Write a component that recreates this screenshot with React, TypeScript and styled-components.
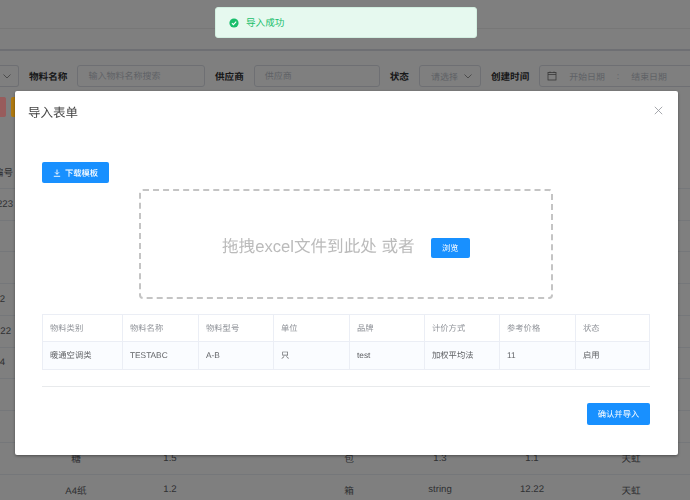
import styled, { createGlobalStyle } from "styled-components";

const GlobalStyle = createGlobalStyle`
    html, body {
        margin: 0;
        padding: 0;
        width: 690px;
        height: 500px;
        overflow: hidden;
        background: #fff;
        font-family: "Liberation Sans", "Noto Sans CJK SC", sans-serif;
        text-rendering: geometricPrecision;
    }
`;

const bgRows = [
    { edge: "223", inset: 1, cells: [] },
    { edge: "", inset: 0, cells: [] },
    { edge: "", inset: 0, cells: [] },
    { edge: "2", inset: 9, cells: [] },
    { edge: ".22", inset: 3, cells: [] },
    { edge: "4", inset: 9, cells: [] },
    { edge: "", inset: 0, cells: [] },
    { edge: "", inset: 0, cells: [] },
    { edge: "", inset: 0, cells: ["糖", "1.5", "", "包", "1.3", "1.1", "天虹"] },
    { edge: "", inset: 0, cells: ["A4纸", "1.2", "", "箱", "string", "12.22", "天虹"] },
];

const headers = ["物料类别", "物料名称", "物料型号", "单位", "品牌", "计价方式", "参考价格", "状态"];
const row = ["暖通空调类", "TESTABC", "A-B", "只", "test", "加权平均法", "11", "启用"];
const colWidths = [80, 76, 75, 76, 75, 75, 76, 74];

export default function App() {
    return (
        <>
            <GlobalStyle />
            <Page>
                <TopBar />
                <TabBar />
                <Filters>
                    <SelectBox $width={19} $flush>
                        <Chevron />
                    </SelectBox>
                    <Label>物料名称</Label>
                    <InputBox $width={127.6}>输入物料名称搜索</InputBox>
                    <Label>供应商</Label>
                    <InputBox $width={126}>供应商</InputBox>
                    <Label>状态</Label>
                    <SelectBox $width={62}>
                        <Placeholder>请选择</Placeholder>
                        <Chevron />
                    </SelectBox>
                    <Label>创建时间</Label>
                    <DateBox>
                        <svg width="10" height="10" viewBox="0 0 10 10" fill="none" stroke="#6e6e6e" strokeWidth="0.8">
                            <rect x="1" y="1.5" width="8" height="7.5" />
                            <path d="M1 3.5h8M3 .5v1.5M7 .5v1.5" />
                        </svg>
                        <DateText>开始日期</DateText>
                        <DateText>:</DateText>
                        <DateText>结束日期</DateText>
                    </DateBox>
                </Filters>
                <Actions>
                    <ActionButton $color="#985c5c" />
                    <ActionButton $color="#b07a10" />
                </Actions>
                <BgTable>
                    <BgRow $head>
                        <BgEdge $inset={1}>编号</BgEdge>
                    </BgRow>
                    {bgRows.map((r, i) => (
                        <BgRow key={i}>
                            <BgEdge $inset={r.inset}>{r.edge}</BgEdge>
                            {r.cells.map((c, j) => (
                                <BgCell key={j}>{c}</BgCell>
                            ))}
                        </BgRow>
                    ))}
                </BgTable>
            </Page>

            <Mask />

            <Toast>
                <svg width="10" height="10" viewBox="0 0 10 10">
                    <circle cx="5" cy="5" r="4.6" fill="#19be6b" />
                    <path d="M2.9 5.1l1.5 1.5 2.8-2.9" fill="none" stroke="#fff" strokeWidth="1.1" />
                </svg>
                <ToastText>导入成功</ToastText>
            </Toast>

            <Modal>
                <ModalHeader>
                    <ModalTitle>导入表单</ModalTitle>
                    <CloseButton>
                        <svg width="9" height="9" viewBox="0 0 9 9" stroke="#909399" strokeWidth="0.8" fill="none">
                            <path d="M.8.8l7.4 7.4M8.2.8L.8 8.2" />
                        </svg>
                    </CloseButton>
                </ModalHeader>
                <ModalBody>
                    <DownloadButton>
                        <svg width="8" height="8" viewBox="0 0 8 8" fill="none" stroke="#fff" strokeWidth="0.9">
                            <path d="M4 .5v4.6M2 3.3L4 5.3 6 3.3M.8 7.3h6.4" />
                        </svg>
                        下载模板
                    </DownloadButton>
                    <DropZone>
                        <DropText>拖拽excel文件到此处 或者</DropText>
                        <BrowseButton>浏览</BrowseButton>
                    </DropZone>
                    <PreviewTable>
                        <colgroup>
                            {colWidths.map((w, i) => (
                                <col key={i} width={w} />
                            ))}
                        </colgroup>
                        <thead>
                            <tr>
                                {headers.map((h) => (
                                    <HeadCell key={h}>{h}</HeadCell>
                                ))}
                            </tr>
                        </thead>
                        <tbody>
                            <tr>
                                {row.map((c) => (
                                    <BodyCell key={c}>{c}</BodyCell>
                                ))}
                            </tr>
                        </tbody>
                    </PreviewTable>
                    <Divider />
                    <Footer>
                        <ConfirmButton>确认并导入</ConfirmButton>
                    </Footer>
                </ModalBody>
            </Modal>
        </>
    );
}

const Chevron = () => (
    <svg width="8" height="5" viewBox="0 0 8 5" fill="none" stroke="#6b6b6b" strokeWidth="0.7">
        <path d="M.5.5L4 4 7.5.5" />
    </svg>
);

const Page = styled.div`
    width: 690px;
    height: 500px;
    overflow: hidden;
    display: flex;
    flex-direction: column;
`;

const TopBar = styled.div`
    height: 28px;
    flex: none;
    border-bottom: 1px solid #eee;
`;

const TabBar = styled.div`
    height: 20px;
    flex: none;
    border-bottom: 2px solid #dcdfe6;
`;

const Filters = styled.div`
    display: flex;
    align-items: center;
    height: 22px;
    margin-top: 14px;
    flex: none;
`;

const Label = styled.span`
    font-size: 9.6px;
    font-weight: 700;
    color: #303133;
    margin: 0 10px;
    white-space: nowrap;
`;

const InputBox = styled.div<{ $width: number }>`
    width: ${(p) => p.$width}px;
    height: 22px;
    box-sizing: border-box;
    border: 1px solid #dcdfe6;
    border-radius: 3px;
    font-size: 9px;
    line-height: 20px;
    color: #c0c4cc;
    padding-left: 10px;
    flex: none;
`;

const SelectBox = styled.div<{ $width: number; $flush?: boolean }>`
    width: ${(p) => p.$width}px;
    height: 22px;
    box-sizing: border-box;
    border: 1px solid #dcdfe6;
    border-left: ${(p) => (p.$flush ? "none" : "1px solid #dcdfe6")};
    border-radius: ${(p) => (p.$flush ? "0 3px 3px 0" : "3px")};
    display: flex;
    align-items: center;
    justify-content: space-between;
    padding-left: ${(p) => (p.$flush ? "3px" : "11px")};
    padding-right: ${(p) => (p.$flush ? "3px" : "8px")};
    flex: none;
`;

const Placeholder = styled.span`
    font-size: 9px;
    color: #c0c4cc;
`;

const DateBox = styled.div`
    flex: 1;
    height: 22px;
    margin-right: -40px;
    box-sizing: border-box;
    border: 1px solid #dcdfe6;
    border-radius: 3px;
    display: flex;
    align-items: center;
    padding-left: 7px;
    gap: 12px;
`;

const DateText = styled.span`
    font-size: 8.9px;
    color: #c0c4cc;
    white-space: nowrap;
`;

const Actions = styled.div`
    display: flex;
    gap: 5px;
    margin-top: 10px;
    flex: none;
`;

const ActionButton = styled.div<{ $color: string }>`
    width: 6px;
    height: 20px;
    background: ${(p) => p.$color};
    border-radius: 0 2px 2px 0;
    position: relative;
    z-index: 2;
    &:last-child {
        width: 40px;
        border-radius: 2px;
    }
`;

const BgTable = styled.div`
    margin-top: 39px;
    flex: none;
    font-size: 9.6px;
    color: #606266;
`;

const BgRow = styled.div<{ $head?: boolean }>`
    display: grid;
    grid-template-columns: 14px 124px 64px 104px 86px 96px 88px 110px;
    height: 31.75px;
    box-sizing: border-box;
    border-top: ${(p) => (p.$head ? "none" : "1px solid #ebeef5")};
    align-items: center;
`;

const BgCell = styled.div`
    text-align: center;
    white-space: nowrap;
`;

const BgEdge = styled.div<{ $inset: number }>`
    display: flex;
    justify-content: flex-end;
    padding-right: ${(p) => p.$inset}px;
    white-space: nowrap;
`;

const Mask = styled.div`
    position: fixed;
    inset: 0;
    background: rgba(0, 0, 0, 0.5);
    z-index: 1;
`;

const Toast = styled.div`
    position: fixed;
    left: 215px;
    top: 7px;
    width: 262px;
    height: 31px;
    box-sizing: border-box;
    background: #e6f9ef;
    border: 1px solid #d2efe0;
    border-radius: 3px;
    display: flex;
    align-items: center;
    padding-left: 13px;
    gap: 7px;
    z-index: 4;
`;

const ToastText = styled.span`
    font-size: 9.6px;
    color: #19be6b;
    margin-top: -1px;
`;

const Modal = styled.div`
    position: fixed;
    left: 15px;
    top: 91px;
    width: 663px;
    height: 364px;
    background: #fff;
    border-radius: 2px;
    box-shadow: 0 1px 3px rgba(0, 0, 0, 0.4);
    z-index: 3;
    display: flex;
    flex-direction: column;
`;

const ModalHeader = styled.div`
    display: flex;
    justify-content: space-between;
    align-items: flex-start;
    padding: 14px 15px 0 13px;
    height: 71px;
    box-sizing: border-box;
    flex: none;
`;

const ModalTitle = styled.div`
    font-size: 12.5px;
    line-height: 17px;
    color: #444;
`;

const CloseButton = styled.div`
    padding-top: 1px;
    line-height: 0;
`;

const ModalBody = styled.div`
    padding: 0 28px 0 27px;
    display: flex;
    flex-direction: column;
`;

const DownloadButton = styled.div`
    align-self: flex-start;
    width: 67px;
    height: 21px;
    background: #1890ff;
    border-radius: 2px;
    color: #fff;
    font-size: 8.3px;
    font-weight: 500;
    display: flex;
    align-items: center;
    justify-content: center;
    gap: 4px;
`;

const DropZone = styled.div`
    align-self: center;
    margin-top: 6px;
    width: 414px;
    height: 110px;
    box-sizing: border-box;
    border: 2px dashed #c4c4c4;
    border-radius: 4px;
    display: flex;
    align-items: center;
    padding-left: 81px;
`;

const DropText = styled.span`
    font-size: 16.6px;
    color: #bbb;
    white-space: nowrap;
    margin-top: 2px;
`;

const BrowseButton = styled.div`
    margin-left: 16px;
    margin-top: 7px;
    width: 39px;
    height: 20px;
    background: #1890ff;
    border-radius: 2px;
    color: #fff;
    font-size: 8.3px;
    line-height: 20px;
    text-align: center;
`;

const PreviewTable = styled.table`
    margin-top: 15px;
    width: 607px;
    table-layout: fixed;
    border-collapse: collapse;
`;

const HeadCell = styled.th`
    height: 27px;
    padding: 0 0 0 7px;
    border: 1px solid #ebeef5;
    font-size: 8.3px;
    line-height: 12px;
    font-weight: 400;
    color: #909399;
    text-align: left;
    vertical-align: middle;
    box-sizing: border-box;
`;

const BodyCell = styled.td`
    height: 28px;
    padding: 0 0 2px 7px;
    border: 1px solid #ebeef5;
    background: #fafcff;
    font-size: 8.3px;
    line-height: 12px;
    color: #606266;
    vertical-align: middle;
    box-sizing: border-box;
`;

const Divider = styled.div`
    margin-top: 16px;
    width: 608px;
    height: 1px;
    background: #e8eaec;
`;

const Footer = styled.div`
    display: flex;
    justify-content: flex-end;
    margin-top: 16px;
`;

const ConfirmButton = styled.div`
    width: 63px;
    height: 22px;
    background: #1890ff;
    border-radius: 2px;
    color: #fff;
    font-size: 8.3px;
    line-height: 22px;
    text-align: center;
`;
